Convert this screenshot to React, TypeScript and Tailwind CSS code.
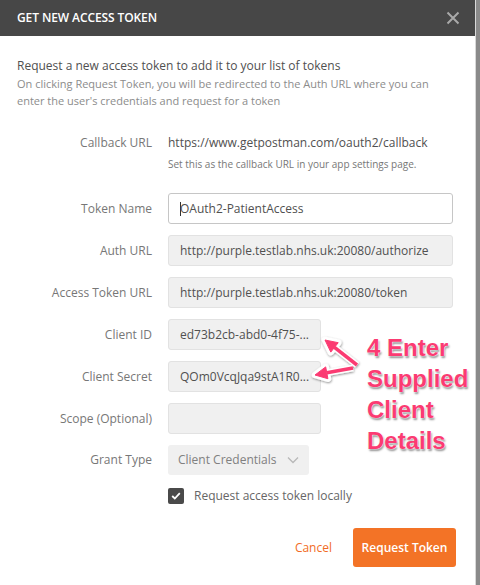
import React from "react";

const font = { fontFamily: '"Open Sans", "Liberation Sans", sans-serif' };

const Row = ({ label, children }: { label: string; children: React.ReactNode }) => (
  <div className="flex items-center gap-4">
    <div className="w-[135px] shrink-0 text-right text-[12px] text-[#777]">{label}</div>
    {children}
  </div>
);

const Field = ({ value, width = "w-[285px]", white = false }: { value: string; width?: string; white?: boolean }) => (
  <div
    className={`${width} h-[31px] flex items-center px-[11px] rounded-[3px] border text-[12px] text-[#505050] whitespace-nowrap overflow-hidden ${
      white ? "bg-white border-[#c6c6c6]" : "bg-[#f0f0f0] border-[#e2e2e2]"
    }`}
  >
    {white && <span className="w-px h-[14px] bg-[#333] mr-[-1px]" />}
    {value}
  </div>
);

export default function App() {
  return (
    <div className="w-[480px] h-[585px] flex bg-[#8a8a8a] overflow-hidden" style={font}>
      <div className="relative w-[476px] h-full bg-white border-r border-[#d8d8d8] flex flex-col">
        <div className="h-[36px] bg-[#474747] flex items-center justify-between pl-[17px] pr-[15px]">
          <span className="text-white text-[12px] font-semibold tracking-[-0.1px]">GET NEW ACCESS TOKEN</span>
          <svg width="14" height="14" viewBox="0 0 14 14">
            <path d="M1.5 1.5 L12.5 12.5 M12.5 1.5 L1.5 12.5" stroke="#a9a9a9" strokeWidth="2" />
          </svg>
        </div>

        <div className="px-[17px] pt-[21px]">
          <div className="text-[12px] leading-[18px] text-[#505050]">
            Request a new access token to add it to your list of tokens
          </div>
          <div className="text-[11px] leading-[17px] text-[#8c8c8c]">
            On clicking Request Token, you will be redirected to the Auth URL where you can
            <br />
            enter the user's credentials and request for a token
          </div>
        </div>

        <div className="mt-[25px] flex gap-4">
          <div className="w-[152px] shrink-0 text-right text-[12px] leading-[18px] text-[#777]">Callback URL</div>
          <div>
            <div className="text-[12px] leading-[18px] text-[#505050]">https://www.getpostman.com/oauth2/callback</div>
            <div className="mt-[5px] text-[10px] leading-[14px] text-[#777]">
              Set this as the callback URL in your app settings page.
            </div>
          </div>
        </div>

        <div className="mt-[22px] pl-[17px] flex flex-col gap-[11px]">
          <Row label="Token Name">
            <Field value="OAuth2-PatientAccess" white />
          </Row>
          <Row label="Auth URL">
            <Field value="http://purple.testlab.nhs.uk:20080/authorize" />
          </Row>
          <Row label="Access Token URL">
            <Field value="http://purple.testlab.nhs.uk:20080/token" />
          </Row>
          <Row label="Client ID">
            <Field value="ed73b2cb-abd0-4f75-..." width="w-[153px]" />
          </Row>
          <Row label="Client Secret">
            <Field value="QOm0VcqJqa9stA1R0..." width="w-[153px]" />
          </Row>
          <Row label="Scope (Optional)">
            <Field value="" width="w-[153px]" />
          </Row>
          <Row label="Grant Type">
            <div className="w-[141px] h-[30px] flex items-center justify-between pl-[10px] pr-[10px] rounded-[3px] bg-[#f0f0f0] text-[12px] text-[#808080]">
              Client Credentials
              <svg width="12" height="8" viewBox="0 0 12 8">
                <path d="M1 1.5 L6 6.5 L11 1.5" fill="none" stroke="#b8b8b8" strokeWidth="1.3" />
              </svg>
            </div>
          </Row>
        </div>

        <div className="mt-[12px] pl-[168px] flex items-center gap-[10px]">
          <div className="w-[16px] h-[16px] rounded-[2px] bg-[#4a4a4a] flex items-center justify-center">
            <svg width="10" height="8" viewBox="0 0 10 8">
              <path d="M1.2 4 L3.8 6.5 L8.8 1.2" fill="none" stroke="white" strokeWidth="1.8" />
            </svg>
          </div>
          <span className="text-[12px] text-[#666]">Request access token locally</span>
        </div>

        <div className="mt-[23px] pr-[19px] flex items-center justify-end gap-[21px]">
          <span className="text-[12px] text-[#f26b25]">Cancel</span>
          <div className="w-[103px] h-[39px] rounded-[3px] bg-[#f37326] text-white text-[12px] font-semibold flex items-center justify-center">
            Request Token
          </div>
        </div>

        <svg className="absolute left-0 top-0 pointer-events-none" width="476" height="585">
          <defs>
            <filter id="sh" x="-20%" y="-20%" width="140%" height="140%">
              <feDropShadow dx="0.5" dy="1" stdDeviation="1" floodColor="#000" floodOpacity="0.45" />
            </filter>
          </defs>
          <g filter="url(#sh)">
            <g stroke="white" strokeWidth="6.5" strokeLinejoin="round" fill="white">
              <line x1="357" y1="365" x2="334.5" y2="347.4" />
              <polygon points="325,340 338.2,342.7 330.8,352.1" />
              <line x1="353" y1="368" x2="326.8" y2="372.8" />
              <polygon points="315,375 325.7,366.9 327.9,378.7" />
            </g>
            <g stroke="#fb3b72" strokeWidth="3.5" strokeLinejoin="round" fill="#fb3b72">
              <line x1="357" y1="365" x2="334.5" y2="347.4" />
              <polygon points="325,340 338.2,342.7 330.8,352.1" strokeWidth="1" />
              <line x1="353" y1="368" x2="326.8" y2="372.8" />
              <polygon points="315,375 325.7,366.9 327.9,378.7" strokeWidth="1" />
            </g>
          </g>
        </svg>

        <div
          className="absolute left-[367px] top-[332px] text-[24px] leading-[31px] font-bold text-[#fb3b72] [text-shadow:0_0_1px_#fff,0_0_2px_#fff,1px_2px_2px_rgba(0,0,0,0.45)]"
          style={{ fontFamily: '"Liberation Sans", Arial, sans-serif' }}
        >
          4 Enter
          <br />
          Supplied
          <br />
          Client
          <br />
          Details
        </div>
      </div>
    </div>
  );
}
